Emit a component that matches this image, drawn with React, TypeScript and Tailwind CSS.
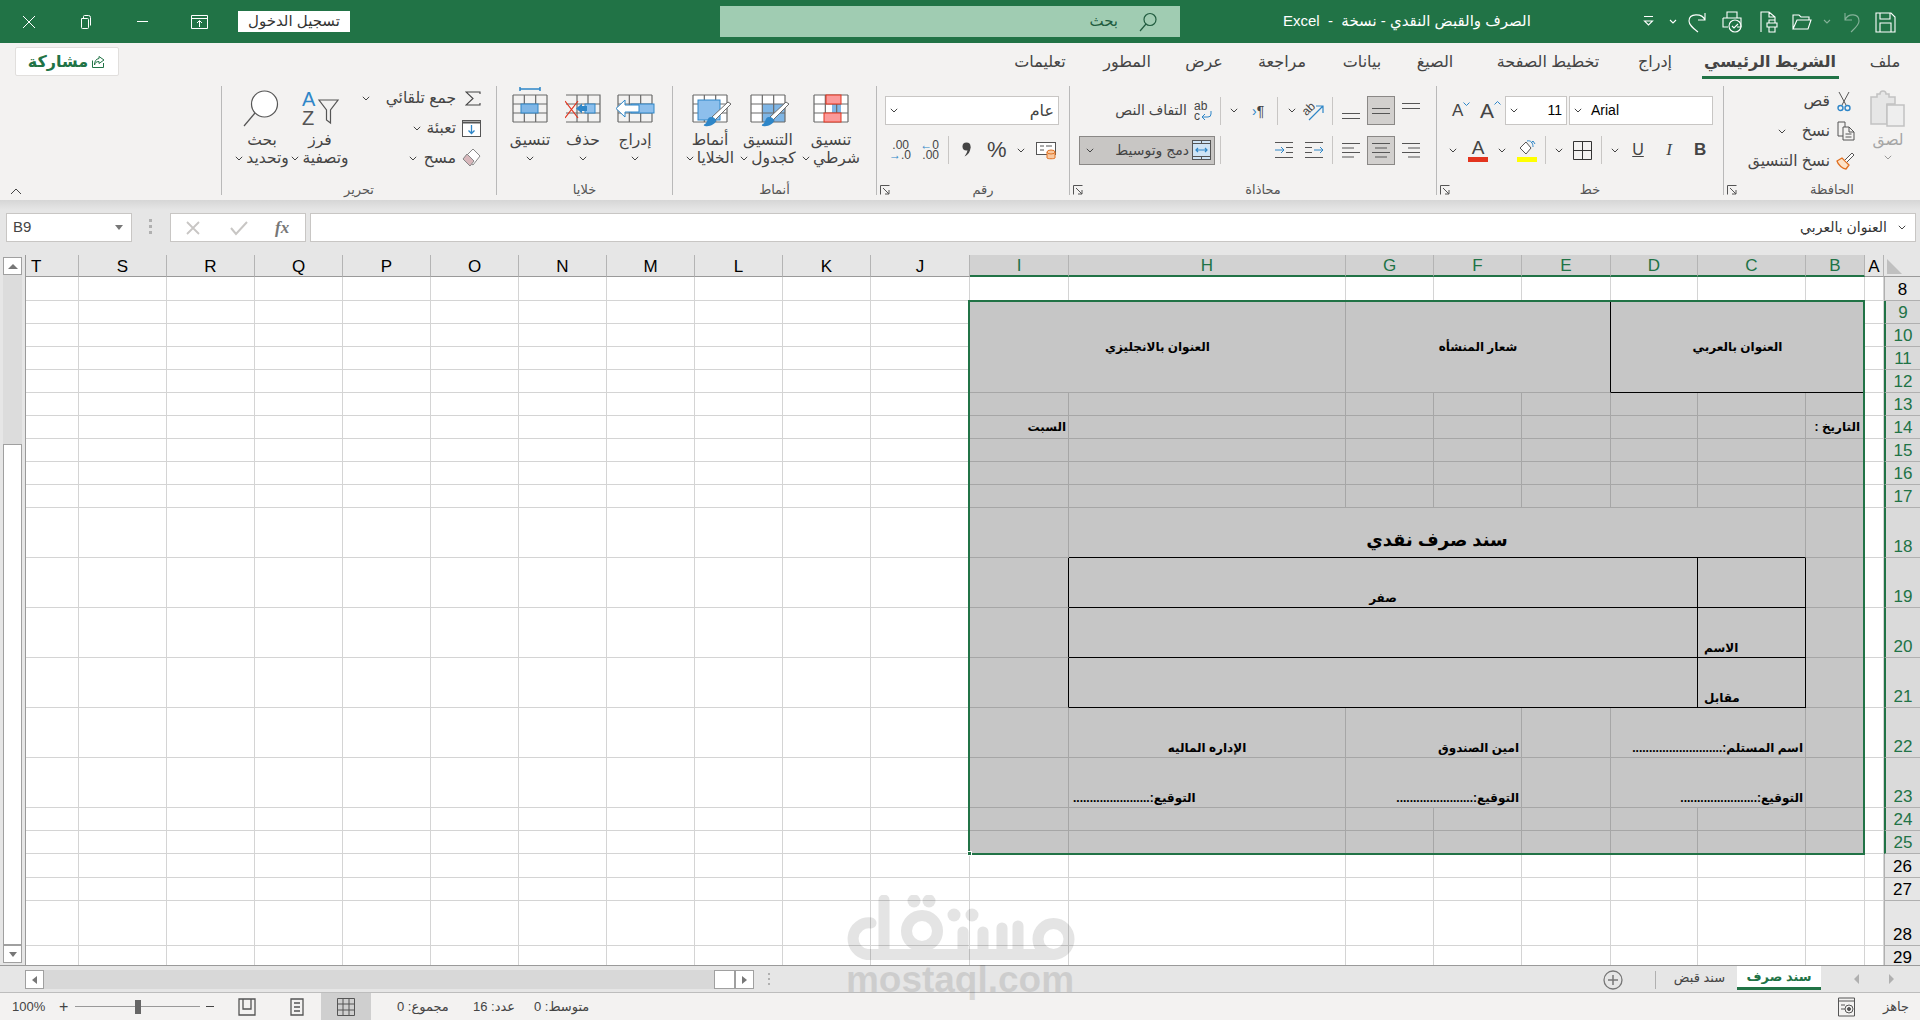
import type { ReactNode } from "react";

function Chev({ className = "" }: { className?: string }) {
  return (
    <svg width="8" height="5" viewBox="0 0 8 5" className={`shrink-0 ${className}`}>
      <path d="M.8.8 4 4l3.2-3.2" fill="none" stroke="#444" strokeWidth="1" />
    </svg>
  );
}

function Launcher() {
  return (
    <svg width="10" height="10" viewBox="0 0 10 10">
      <path d="M.5 9.5V.5h9M3 3l6 6M9 5v4H5" fill="none" stroke="#555" strokeWidth="1" />
    </svg>
  );
}

function Sep({ className = "" }: { className?: string }) {
  return <div className={`w-px h-[28px] shrink-0 bg-[#c8c6c4] ${className}`} />;
}

function Ar({ children, className = "" }: { children: ReactNode; className?: string }) {
  return (
    <span dir="rtl" className={`whitespace-nowrap ${className}`}>
      {children}
    </span>
  );
}

/* ---- quick access / title bar ---- */
function WinIcon({ d, w = 14, h = 14 }: { d: string; w?: number; h?: number }) {
  return (
    <svg width={w} height={h} viewBox={`0 0 ${w} ${h}`}>
      <path d={d} fill="none" stroke="#fff" strokeWidth="1" />
    </svg>
  );
}

function TitleBar() {
  return (
    <div className="h-[43px] bg-[#217346] flex items-center text-white shrink-0">
      <div className="w-[57px] flex justify-center">
        <WinIcon d="M1 1l12 12M13 1 1 13" />
      </div>
      <div className="w-[57px] flex justify-center">
        <WinIcon d="M3.5 3V1.5a1 1 0 0 1 1-1h4a2 2 0 0 1 2 2v8M1.5 3.5h6a1 1 0 0 1 1 1v8a1 1 0 0 1-1 1h-5a1 1 0 0 1-1-1z" w={11} h={14} />
      </div>
      <div className="w-[57px] flex justify-center">
        <div className="w-[11px] h-px bg-white" />
      </div>
      <div className="w-[57px] flex justify-center">
        <WinIcon d="M.5 1.5h16v13H.5zM.5 4.5h16M8.5 13V7M6 9l2.5-2.5L11 9" w={17} h={16} />
      </div>
      <div className="ml-[10px] w-[112px] h-[21px] bg-white text-[#333] text-[15px] flex items-center justify-center">
        <Ar>تسجيل الدخول</Ar>
      </div>
      <div className="ml-[370px] w-[460px] h-[31px] bg-[#a0ccb2] flex items-center justify-end pr-[22px] text-[#215c3f] text-[15px]">
        <Ar>بحث</Ar>
        <svg width="20" height="20" viewBox="0 0 20 20" className="ml-[20px]">
          <circle cx="12" cy="7.5" r="6" fill="none" stroke="#215c3f" strokeWidth="1.2" />
          <path d="M8 12 2 19" stroke="#215c3f" strokeWidth="1.2" />
        </svg>
      </div>
      <div className="ml-[103px] w-[247px] text-[15px] text-right">
        <Ar>الصرف والقبض النقدي - نسخة &nbsp;-&nbsp; Excel</Ar>
      </div>
      <svg width="372" height="24" viewBox="1530 11 372 24" className="shrink-0" fill="none" stroke="#fff" strokeWidth="1.1">
        <path d="M1644 17.5h9M1644.5 22h8l-4 4z" />
        <path d="M1670 21l3 3 3-3" />
        <path d="M1705 14v7h-7M1705 21c-3-7-16-7-16 1 0 4 4 7 9 11" />
        <path d="M1727 19v-6h10v6M1723 19h18v9h-4M1723 19v9h5M1727 13h10" />
        <circle cx="1735" cy="27" r="6" />
        <path d="M1732 27l2 2 4-4" />
        <path d="M1761 33V13h8l6 5v4M1769 13v5h6M1767 24h10v4h-10zM1769 24v-3h6v3M1769 28v5h6v-5" />
        <path d="M1793 30V16h6l2 2h8v3M1793 30l4-9h14l-3 9z" />
        <g opacity=".45">
          <path d="M1824 21l3 3 3-3" />
          <path d="M1845 14v7h7M1845 21c3-7 14-7 14 1 0 4-4 7-8 11" />
        </g>
        <path d="M1876 14h15l4 4v15h-19zM1880 14v6h10v-6M1880 33v-9h11v9" />
      </svg>
    </div>
  );
}

function Tab({ w, children, active }: { w: string; children: ReactNode; active?: boolean }) {
  return (
    <div className={`${w} h-[43px] flex flex-col items-center pt-[9px] text-[16px] leading-[20px] ${active ? "font-bold" : ""}`}>
      <Ar>{children}</Ar>
      {active && <div className="mt-[4px] w-[137px] h-[3px] bg-[#217346]" />}
    </div>
  );
}

function TabRow() {
  return (
    <div className="h-[43px] bg-[#f3f2f1] flex text-[#444] shrink-0">
      <div className="ml-[15px] mt-[4px] w-[104px] h-[29px] bg-white border border-[#e1dfdd] rounded-[2px] flex items-center justify-center text-[#217346] text-[16px] font-bold">
        <Ar>مشاركة</Ar>
        <svg width="15" height="15" viewBox="0 0 15 15" className="ml-[3px]" fill="none" stroke="#217346">
          <path d="M1.5 6.5v7h11V9M8 2.5l5 3.5-5 3.5V7.5C5 7.5 4 9 3.5 11 3.5 7 5 5 8 4.5z" />
        </svg>
      </div>
      <div className="ml-auto flex">
        <Tab w="w-[80px]">تعليمات</Tab>
        <Tab w="w-[94px]">المطور</Tab>
        <Tab w="w-[60px]">عرض</Tab>
        <Tab w="w-[96px]">مراجعة</Tab>
        <Tab w="w-[64px]">بيانات</Tab>
        <Tab w="w-[82px]">الصيغ</Tab>
        <Tab w="w-[144px]">تخطيط الصفحة</Tab>
        <Tab w="w-[70px]">إدراج</Tab>
        <Tab w="w-[160px]" active>الشريط الرئيسي</Tab>
        <Tab w="w-[70px]">ملف</Tab>
      </div>
    </div>
  );
}

/* ---- ribbon icons ---- */
function CellGrid({ x = 1, w = 34 }: { x?: number; w?: number }) {
  const cols = [x, x + w / 3, x + (2 * w) / 3, x + w];
  return (
    <g stroke="#6a6a6a" strokeWidth="1.2" fill="none">
      {cols.map((c) => (
        <path key={c} d={`M${c} 1v27`} />
      ))}
      {[1, 10, 19, 28].map((y) => (
        <path key={y} d={`M${x} ${y}h${w}`} />
      ))}
    </g>
  );
}

function Brush() {
  return (
    <g>
      <path d="M36 8l3 2-16 16-3-3z" fill="#fff" stroke="#6a6a6a" />
      <path d="M19 23c3 0 5 2 5 4-1 3-6 6-11 5-1 0-2-1 0-2 3-2 2-7 6-7z" fill="#2e86c8" />
    </g>
  );
}

function CondIcon() {
  return (
    <svg width="36" height="32" viewBox="0 0 36 32" className="overflow-visible">
      <rect x="1" y="1" width="34" height="27" fill="#fff" />
      <rect x="19" y="10" width="9" height="9" fill="#7fb6e6" />
      <CellGrid />
      <rect x="13" y="1" width="15" height="9" fill="#fb9a9a" stroke="#e3341e" />
      <rect x="11" y="19" width="17" height="9" fill="#fb9a9a" stroke="#e3341e" />
    </svg>
  );
}

function TableIcon() {
  return (
    <svg width="36" height="32" viewBox="0 0 36 32" className="overflow-visible">
      <rect x="1" y="1" width="34" height="27" fill="#fff" />
      <rect x="12" y="10" width="23" height="18" fill="#7fb6e6" />
      <CellGrid />
      <Brush />
    </svg>
  );
}

function CellStyleIcon() {
  return (
    <svg width="36" height="32" viewBox="0 0 36 32" className="overflow-visible">
      <rect x="1" y="1" width="34" height="27" fill="#fff" />
      <CellGrid />
      <rect x="6" y="6" width="22" height="20" fill="#8dbfec" stroke="#2e86c8" />
      <Brush />
    </svg>
  );
}

function InsertIcon() {
  return (
    <svg width="40" height="29" viewBox="0 0 40 29">
      <CellGrid x={3} w={34} />
      <rect x="16" y="10" width="23" height="9" fill="#8dbfec" stroke="#2e86c8" />
      <path d="M1 14.500 10 6v5h14v7H10v5z" fill="#fff" stroke="#2e86c8" />
    </svg>
  );
}

function DeleteIcon() {
  return (
    <svg width="36" height="29" viewBox="0 0 36 29">
      <g stroke="#6a6a6a" strokeWidth="1.200" fill="none">
        <path d="M1 1h34v27H1M12 1v27M23 1v27M1 10h34M1 19h34" />
      </g>
      <rect x="20" y="10" width="10" height="9" fill="#8dbfec" stroke="#2e86c8" />
      <path d="M11 14.500l6-5v2.500h5v5h-5v2.500z" fill="#2e86c8" />
      <path d="M0 7l13 17M13 7 0 24" stroke="#e3341e" strokeWidth="1.200" fill="none" />
    </svg>
  );
}

function FormatIcon() {
  return (
    <svg width="36" height="29" viewBox="0 0 36 29" className="overflow-visible">
      <path d="M8-5h20M8-7v4M28-7v4" stroke="#2e86c8" strokeWidth="1.500" fill="none" />
      <CellGrid />
      <rect x="9" y="10" width="17" height="9" fill="#7fb6e6" stroke="#2e86c8" />
    </svg>
  );
}

function SumIcon() {
  return (
    <svg width="16" height="15" viewBox="0 0 16 15">
      <path d="M15 3V1H1l7 6.500L1 14h14v-2" fill="none" stroke="#444" strokeWidth="1.100" />
    </svg>
  );
}

function FillIcon() {
  return (
    <svg width="19" height="17" viewBox="0 0 19 17">
      <rect x=".5" y=".5" width="18" height="16" fill="#fff" stroke="#555" />
      <path d="M.5 2.500h18" stroke="#555" strokeWidth="2" />
      <path d="M9.500 5v8M6.500 10.500l3 3 3-3" fill="none" stroke="#2e86c8" strokeWidth="1.300" />
    </svg>
  );
}

function ClearIcon() {
  return (
    <svg width="20" height="20" viewBox="0 0 20 20">
      <path d="M12 1l7 7-7 9-9-7z" fill="#fff" stroke="#888" />
      <path d="M2 11l4-5 7 7-4 5z" fill="#d8b8bc" stroke="#888" />
    </svg>
  );
}

function SortIcon() {
  return (
    <svg width="37" height="36" viewBox="0 0 37 36" fill="none" className="overflow-visible -mt-[4px]">
      <text x="0" y="16" fontSize="20" fill="#2e86c8" fontFamily="Liberation Sans">A</text>
      <text x="0" y="35" fontSize="20" fill="#555" fontFamily="Liberation Sans">Z</text>
      <path d="M17 10h19l-7.500 10v13l-4-3V20z" stroke="#555" strokeWidth="1.200" />
    </svg>
  );
}

function SearchIcon() {
  return (
    <svg width="36" height="37" viewBox="0 0 36 37" fill="none" stroke="#555" strokeWidth="1.200" className="-mt-[4px] -ml-[2px]">
      <circle cx="21.500" cy="14" r="13" fill="#fff" />
      <path d="M12 23 1 36" />
    </svg>
  );
}

function PasteIcon() {
  return (
    <svg width="36" height="38" viewBox="0 0 36 38" fill="none" stroke="#c2c2c2" strokeWidth="1.500">
      <path d="M1 7h6V4h3a3 3 0 0 1 6 0h3v3h6v7H17v20H1z" fill="#e6e6e6" />
      <rect x="17" y="15" width="17" height="21" fill="#eee" />
    </svg>
  );
}

function ScissorsIcon() {
  return (
    <svg width="14" height="21" viewBox="0 0 14 21" fill="none" className="mr-[4px]">
      <path d="M2 1l7 13M12 1 5 14" stroke="#555" />
      <circle cx="3.500" cy="17" r="2.500" stroke="#2e86c8" strokeWidth="1.400" />
      <circle cx="10.500" cy="17" r="2.500" stroke="#2e86c8" strokeWidth="1.400" />
    </svg>
  );
}

function CopyIcon() {
  return (
    <svg width="18" height="20" viewBox="0 0 18 20" fill="none" stroke="#555">
      <path d="M6 15H1V1h7v5" />
      <path d="M6 6h6l5 5v8H6zM12 6v5h5M8.500 13h6M8.500 16h6" />
    </svg>
  );
}

function PainterIcon() {
  return (
    <svg width="19" height="18" viewBox="0 0 19 18" fill="none">
      <path d="M1 9l5-3 7 7-3 4c-3 0-8-4-9-8z" fill="#fde3c8" stroke="#e07020" strokeWidth="1.300" />
      <path d="M9 8l7-7 2 2-7 7" fill="#fff" stroke="#555" />
    </svg>
  );
}

function Lines({ widths, y0, step, align }: { widths: number[]; y0: number; step: number; align: "l" | "c" | "r" }) {
  return (
    <svg width="18" height="18" viewBox="0 0 18 18" className="shrink-0">
      {widths.map((w, i) => {
        const x = align === "l" ? 0 : align === "r" ? 18 - w : (18 - w) / 2;
        return <path key={i} d={`M${x} ${y0 + i * step + 0.5}h${w}`} stroke="#555" />;
      })}
    </svg>
  );
}

function IndentIcon({ flip }: { flip?: boolean }) {
  return (
    <svg width="18" height="18" viewBox="0 0 18 18" className="shrink-0" fill="none">
      <path d="M0 1.500h18M0 16.500h18" stroke="#555" />
      {flip ? (
        <>
          <path d="M0 6.500h7M0 11.500h7" stroke="#555" />
          <path d="M9 9h9M15 6l3 3-3 3" stroke="#2e86c8" />
        </>
      ) : (
        <>
          <path d="M11 6.500h7M11 11.500h7" stroke="#555" />
          <path d="M0 9h9M6 6l3 3-3 3" stroke="#2e86c8" />
        </>
      )}
    </svg>
  );
}

function Selected({ children }: { children: ReactNode }) {
  return (
    <div className="w-[28px] h-[29px] ml-[7px] mr-[7px] bg-[#d2d0ce] border border-[#8a8886] flex items-center justify-center">{children}</div>
  );
}

function MergeIcon() {
  return (
    <svg width="19" height="20" viewBox="0 0 19 20" fill="none">
      <rect x=".5" y=".5" width="18" height="19" fill="#cfe4f5" stroke="#555" />
      <path d="M.5 3.500h18M.5 16.500h18" stroke="#555" />
      <path d="M9.500 .5v3M9.500 16.500v3" stroke="#555" />
      <path d="M4 10h11M6 8l-2 2 2 2M13 8l2 2-2 2" stroke="#2e86c8" strokeWidth="1.200" />
    </svg>
  );
}

/* ---- ribbon ---- */
function Group({ w, label, launcher, children }: { w: string; label: string; launcher?: boolean; children: ReactNode }) {
  return (
    <div className={`${w} flex shrink-0`}>
      <div className="w-px h-[109px] bg-[#b9b9b9] shrink-0" />
      <div className="flex-1 min-w-0 flex flex-col">
        <div className="h-[94px]">{children}</div>
        <div className="h-[20px] flex items-center text-[13px] text-[#555]">
          {launcher && (
            <div className="w-[20px] pl-[3px] flex items-center">
              <Launcher />
            </div>
          )}
          <div className="flex-1 text-center">
            <Ar>{label}</Ar>
          </div>
        </div>
      </div>
    </div>
  );
}

function BigItem({ icon, l1, l2, w, className = "" }: { icon: ReactNode; l1: string; l2?: string; w: string; className?: string }) {
  return (
    <div className={`${w} ${className} flex flex-col items-center pt-[8px] shrink-0`}>
      <div className="h-[36px] flex justify-center">{icon}</div>
      <div className="h-[19px] leading-[19px] text-center">
        <Ar>{l1}</Ar>
      </div>
      <div className="h-[18px] flex items-center justify-center">
        <Chev className={l2 ? "mr-[3px]" : ""} />
        {l2 && <Ar>{l2}</Ar>}
      </div>
    </div>
  );
}

function SmallRow({ icon, label, chev, gap = "" }: { icon: ReactNode; label: string; chev?: boolean; gap?: string }) {
  return (
    <div className="h-[30px] flex items-center justify-end">
      {chev && <Chev className={gap} />}
      <Ar>{label}</Ar>
      <div className="w-[26px] flex justify-end pr-[1px]">{icon}</div>
    </div>
  );
}

function DecimalIcon({ more }: { more?: boolean }) {
  return (
    <div className="w-[20px] text-[12px] leading-[10px] text-right">
      {more ? (
        <>
          <span className="text-[#2e86c8]">←</span>0
          <br />
          .00
        </>
      ) : (
        <>
          .00
          <br />
          <span className="text-[#2e86c8]">→</span>.0
        </>
      )}
    </div>
  );
}

function Ribbon() {
  return (
    <div className="h-[114px] bg-[#f3f2f1] flex text-[#444] text-[15.5px] shrink-0">
      <div className="w-[221px] shrink-0 flex items-end pb-[5px] pl-[10px]">
        <svg width="12" height="7" viewBox="0 0 12 7">
          <path d="M1 6l5-5 5 5" fill="none" stroke="#444" />
        </svg>
      </div>

      <Group w="w-[275px]" label="تحرير">
        <div className="flex">
          <BigItem w="w-[50px]" className="ml-[15px]" icon={<SearchIcon />} l1="بحث" l2="وتحديد" />
          <BigItem w="w-[50px]" className="ml-[8px]" icon={<SortIcon />} l1="فرز" l2="وتصفية" />
          <div className="ml-[15px] w-[122px] -mt-[3px]">
            <SmallRow icon={<SumIcon />} label="جمع تلقائي" chev gap="mr-[16px]" />
            <SmallRow icon={<FillIcon />} label="تعبئة" chev gap="mr-[6px]" />
            <SmallRow icon={<ClearIcon />} label="مسح" chev gap="mr-[7px]" />
          </div>
        </div>
      </Group>

      <Group w="w-[176px]" label="خلايا">
        <div className="flex">
          <BigItem w="w-[52px]" className="ml-[7px]" icon={<FormatIcon />} l1="تنسيق" />
          <BigItem w="w-[52px]" className="ml-[1px]" icon={<DeleteIcon />} l1="حذف" />
          <BigItem w="w-[52px]" icon={<InsertIcon />} l1="إدراج" />
        </div>
      </Group>

      <Group w="w-[204px]" label="أنماط">
        <div className="flex">
          <BigItem w="w-[58px]" className="ml-[8px]" icon={<CellStyleIcon />} l1="أنماط" l2="الخلايا" />
          <BigItem w="w-[58px]" icon={<TableIcon />} l1="التنسيق" l2="كجدول" />
          <BigItem w="w-[58px]" className="ml-[5px]" icon={<CondIcon />} l1="تنسيق" l2="شرطي" />
        </div>
      </Group>

      <Group w="w-[193px]" label="رقم" launcher>
        <div className="mt-[10px] ml-[8px] w-[174px] h-[29px] bg-white border border-[#c8c6c4] flex items-center justify-between px-[4px] text-[16px]">
          <Chev />
          <Ar>عام</Ar>
        </div>
        <div className="mt-[10px] h-[30px] flex items-center">
          <div className="ml-[12px]">
            <DecimalIcon />
          </div>
          <div className="ml-[10px]">
            <DecimalIcon more />
          </div>
          <Sep className="ml-[9px]" />
          <svg width="9" height="16" viewBox="0 0 9 16" className="ml-[13px]">
            <circle cx="4.500" cy="4.500" r="4" fill="#444" />
            <path d="M8.500 4.500c0 5-2 8-6 10 2-3 3-5 3-7z" fill="#444" />
          </svg>
          <div className="ml-[16px] w-[19px] text-[22px] leading-[22px]">%</div>
          <Chev className="ml-[11px]" />
          <svg width="20" height="20" viewBox="0 0 20 20" className="ml-[11px]" fill="none">
            <rect x=".5" y="2.500" width="19" height="12" fill="#fff" stroke="#555" />
            <path d="M4 6h4M4 10h4M10 6h6" stroke="#555" />
            <path d="M11 12v6c0 1 8 1 8 0v-6" fill="#f9c9a0" stroke="#e07020" />
            <ellipse cx="15" cy="12" rx="4" ry="2" fill="#f9c9a0" stroke="#e07020" />
          </svg>
        </div>
      </Group>

      <Group w="w-[367px]" label="محاذاة" launcher>
        <div className="mt-[10px] h-[29px] flex items-center">
          <div className="ml-[44px] w-[73px] text-right text-[14px]">
            <Ar>التفاف النص</Ar>
          </div>
          <svg width="18" height="20" viewBox="0 0 18 20" className="ml-[7px]" fill="none">
            <text x="0" y="9" fontSize="12" fill="#444" fontFamily="Liberation Sans">ab</text>
            <text x="0" y="19" fontSize="12" fill="#444" fontFamily="Liberation Sans">c</text>
            <path d="M17 10v3a3 3 0 0 1-3 3H8M11 13l-3 3 3 3" stroke="#2e86c8" />
          </svg>
          <Sep className="ml-[8px]" />
          <Chev className="ml-[9px]" />
          <div className="ml-[14px] w-[15px] text-[14px] leading-none">
            <span className="text-[#2e86c8]">›</span>¶
          </div>
          <Sep className="ml-[10px]" />
          <Chev className="ml-[10px]" />
          <svg width="20" height="20" viewBox="0 0 20 20" className="ml-[8px] overflow-visible">
            <text x="-1" y="11" fontSize="12" fill="#444" transform="rotate(-45 6 9)" fontFamily="Liberation Sans">ab</text>
            <path d="M5 19 19 5M12 5h7v7" fill="none" stroke="#2e86c8" strokeWidth="1.200" />
          </svg>
          <Sep className="ml-[8px]" />
          <div className="ml-[9px]">
            <Lines widths={[18, 18]} y0={11} step={5} align="c" />
          </div>
          <Selected>
            <Lines widths={[18, 18]} y0={6} step={5} align="c" />
          </Selected>
          <Lines widths={[18, 18]} y0={1} step={5} align="c" />
        </div>
        <div className="mt-[10px] h-[30px] flex items-center">
          <div className="ml-[9px] w-[136px] h-[29px] bg-[#c8c6c4] border border-[#8a8886] flex items-center pl-[6px] pr-[3px]">
            <Chev />
            <div className="flex-1 text-right pr-[3px] text-[14px]">
              <Ar>دمج وتوسيط</Ar>
            </div>
            <MergeIcon />
          </div>
          <Sep className="ml-[5px]" />
          <div className="ml-[54px]">
            <IndentIcon />
          </div>
          <div className="ml-[12px]">
            <IndentIcon flip />
          </div>
          <Sep className="ml-[9px]" />
          <div className="ml-[9px]">
            <Lines widths={[18, 12, 18, 12]} y0={2} step={4.500} align="l" />
          </div>
          <Selected>
            <Lines widths={[18, 12, 18, 12]} y0={2} step={4.500} align="c" />
          </Selected>
          <Lines widths={[18, 12, 18, 12]} y0={2} step={4.500} align="r" />
        </div>
      </Group>

      <Group w="w-[287px]" label="خط" launcher>
        <div className="mt-[10px] h-[29px] flex items-center">
          <div className="ml-[15px] w-[16px] text-[17px] leading-none relative">
            A
            <svg width="7" height="4" viewBox="0 0 7 4" className="absolute left-[11px] top-[0px]">
              <path d="M.5.5l3 3 3-3" fill="none" stroke="#2e86c8" />
            </svg>
          </div>
          <div className="ml-[12px] w-[19px] text-[21px] leading-none relative">
            A
            <svg width="7" height="4" viewBox="0 0 7 4" className="absolute left-[14px] top-[1px]">
              <path d="M.5 3.500l3-3 3 3" fill="none" stroke="#2e86c8" />
            </svg>
          </div>
          <div className="ml-[6px] w-[62px] h-[29px] bg-white border border-[#c8c6c4] flex items-center justify-between px-[4px] text-[14px] text-black">
            <Chev />
            <span>11</span>
          </div>
          <div className="ml-[2px] w-[144px] h-[29px] bg-white border border-[#c8c6c4] flex items-center px-[4px] text-[14px] text-black">
            <Chev />
            <span className="ml-[9px]">Arial</span>
          </div>
        </div>
        <div className="mt-[10px] h-[30px] flex items-center">
          <Chev className="ml-[12px]" />
          <div className="ml-[11px] w-[20px] flex flex-col items-center">
            <span className="text-[19px] leading-[19px]">A</span>
            <div className="w-[20px] h-[5px] bg-[#e3341e]" />
          </div>
          <Chev className="ml-[10px]" />
          <div className="ml-[11px] w-[20px] flex flex-col items-center">
            <svg width="18" height="18" viewBox="0 0 18 18" fill="none">
              <path d="M2 9l6-6 5 6-5 6z" fill="#fff" stroke="#555" />
              <path d="M9 2c4-1 6 2 6 6M13 4l2-2 2 3" stroke="#2e86c8" />
            </svg>
            <div className="w-[20px] h-[5px] bg-[#ffff00]" />
          </div>
          <Sep className="ml-[8px]" />
          <Chev className="ml-[9px]" />
          <svg width="19" height="19" viewBox="0 0 19 19" className="ml-[10px]" fill="none">
            <path d="M.5.5h18v18H.5zM9.500.5v18M.5 9.500h18" stroke="#333" />
          </svg>
          <Sep className="ml-[9px]" />
          <Chev className="ml-[9px]" />
          <div className="ml-[13px] w-[12px] text-[16px] underline text-center">U</div>
          <div className="ml-[19px] w-[12px] text-[17px] italic text-center font-['Liberation_Serif',serif]">I</div>
          <div className="ml-[19px] w-[12px] text-[17px] font-bold text-center">B</div>
        </div>
      </Group>

      <Group w="w-[197px]" label="الحافظة" launcher>
        <div className="flex">
          <div className="ml-[16px] w-[116px]">
            <SmallRow icon={<ScissorsIcon />} label="قص" />
            <SmallRow icon={<CopyIcon />} label="نسخ" chev gap="mr-[16px]" />
            <SmallRow icon={<PainterIcon />} label="نسخ التنسيق" />
          </div>
          <div className="ml-[14px] w-[36px] pt-[4px] flex flex-col items-center text-[#a5a5a5]">
            <PasteIcon />
            <div className="h-[19px] leading-[19px] mt-[2px]">
              <Ar>لصق</Ar>
            </div>
            <Chev className="mt-[6px] opacity-50" />
          </div>
        </div>
      </Group>
    </div>
  );
}

function FormulaBar() {
  return (
    <div className="h-[55px] bg-[#e6e6e6] shrink-0 flex flex-col">
      <div className="h-[10px] bg-gradient-to-b from-[#d6d6d6] to-[#e6e6e6]" />
      <div className="mt-[3px] flex items-start h-[29px]">
        <div className="ml-[6px] w-[126px] h-[29px] bg-white border border-[#c8c6c4] flex items-center justify-between pl-[6px] pr-[8px] text-[15px] text-[#444]">
          <span>B9</span>
          <div className="w-0 h-0 border-x-[4px] border-x-transparent border-t-[5px] border-t-[#777]" />
        </div>
        <div className="ml-[17px] mt-[6px] w-[3px] flex flex-col gap-[3px]">
          <div className="h-[3px] bg-[#b0b0b0]" />
          <div className="h-[3px] bg-[#b0b0b0]" />
          <div className="h-[3px] bg-[#b0b0b0]" />
        </div>
        <div className="ml-[18px] w-[136px] h-[29px] bg-white border border-[#c8c6c4] flex items-center text-[#bbb]">
          <svg width="16" height="16" viewBox="0 0 16 16" className="ml-[14px]">
            <path d="M2 2l12 12M14 2 2 14" stroke="#c8c6c4" strokeWidth="1.800" />
          </svg>
          <svg width="18" height="16" viewBox="0 0 18 16" className="ml-[29px]">
            <path d="M1 8l5 6L17 2" fill="none" stroke="#c8c6c4" strokeWidth="2" />
          </svg>
          <span className="ml-[27px] text-[17px] italic font-bold text-[#777] font-['Liberation_Serif',serif]">fx</span>
        </div>
        <div className="ml-[4px] w-[1606px] h-[29px] bg-white border border-[#c8c6c4] flex items-center justify-end pr-[9px] text-[14px] text-[#333]">
          <Ar>العنوان بالعربي</Ar>
          <Chev className="ml-[11px]" />
        </div>
      </div>
    </div>
  );
}

/* ---- sheet ---- */
const COLS = ["T", "S", "R", "Q", "P", "O", "N", "M", "L", "K", "J", "I", "H", "G", "F", "E", "D", "C", "B", "A"];
const BLACK_R = "border-r-black";
const BLACK_B = "border-b-black";

function Blank({ sel, cls = "", children }: { sel?: boolean; cls?: string; children?: ReactNode }) {
  return (
    <div
      className={`flex min-w-0 border-r border-b ${
        sel ? "bg-[#c6c6c6] border-r-[#a6a6a6] border-b-[#a6a6a6]" : "bg-white border-r-[#d4d4d4] border-b-[#d4d4d4]"
      } ${cls}`}
    >
      {children}
    </div>
  );
}

function RowHeader({ n, sel }: { n: number; sel?: boolean }) {
  return (
    <div
      className={`flex items-end justify-center text-[17px] leading-[20px] border-b border-b-[#b0b0b0] ${
        sel ? "bg-[#dadada] text-[#217346] border-l-2 border-l-[#217346]" : "bg-[#e6e6e6] text-black border-l border-l-[#b0b0b0]"
      }`}
    >
      {n}
    </div>
  );
}

function CT({ children, cls = "" }: { children: ReactNode; cls?: string }) {
  return (
    <span dir="rtl" className={`whitespace-nowrap text-[12px] font-bold leading-[18px] text-black ${cls}`}>
      {children}
    </span>
  );
}

function middle(n: number) {
  const plain = (sel: boolean, count = 8) =>
    Array.from({ length: count }, (_, i) => <Blank key={`p${i}`} sel={sel} />);
  if (n === 9)
    return [
      <Blank key="a" sel cls="col-span-2 row-span-4 items-center justify-center">
        <CT>العنوان بالانجليزي</CT>
      </Blank>,
      <Blank key="b" sel cls={`col-span-3 row-span-4 items-center justify-center ${BLACK_R}`}>
        <CT>شعار المنشأه</CT>
      </Blank>,
      <Blank key="c" sel cls={`col-span-3 row-span-4 items-center justify-center ${BLACK_B}`}>
        <CT>العنوان بالعربي</CT>
      </Blank>,
    ];
  if (n >= 10 && n <= 12) return [];
  if (n === 14)
    return [
      <Blank key="i" sel cls="items-center justify-end pr-[2px]">
        <CT>السبت</CT>
      </Blank>,
      ...plain(true, 6),
      <Blank key="bb" sel cls="items-center justify-end pr-[4px]">
        <CT>التاريخ :</CT>
      </Blank>,
    ];
  if (n === 18)
    return [
      <Blank key="i" sel />,
      <Blank key="t" sel cls={`col-span-6 items-end justify-center ${BLACK_B}`}>
        <CT cls="text-[18px] leading-[34px]">سند صرف نقدي</CT>
      </Blank>,
      <Blank key="bb" sel />,
    ];
  if (n === 19 || n === 20 || n === 21) {
    const label = n === 20 ? "الاسم" : n === 21 ? "مقابل" : "";
    return [
      <Blank key="i" sel cls={BLACK_R} />,
      <Blank key="t" sel cls={`col-span-5 items-end justify-center ${BLACK_R} ${BLACK_B}`}>
        {n === 19 && <CT>صفر</CT>}
      </Blank>,
      <Blank key="c" sel cls={`items-end justify-start pl-[6px] ${BLACK_R} ${BLACK_B}`}>
        {label && <CT>{label}</CT>}
      </Blank>,
      <Blank key="bb" sel />,
    ];
  }
  if (n === 22 || n === 23) {
    const sig = "التوقيع:.......................";
    return [
      <Blank key="i" sel />,
      <Blank key="h" sel cls={`items-end ${n === 22 ? "justify-center" : "justify-start pl-[4px]"}`}>
        <CT>{n === 22 ? "الإداره الماليه" : sig}</CT>
      </Blank>,
      <Blank key="g" sel cls="col-span-2 items-end justify-end pr-[2px]">
        <CT>{n === 22 ? "امين الصندوق" : sig}</CT>
      </Blank>,
      <Blank key="e" sel />,
      <Blank key="d" sel cls="col-span-2 items-end justify-end pr-[2px]">
        <CT>{n === 22 ? "اسم المستلم:..........................." : sig}</CT>
      </Blank>,
      <Blank key="bb" sel />,
    ];
  }
  return plain(n >= 9 && n <= 25);
}

const ROWS = Array.from({ length: 22 }, (_, i) => i + 8);

function Sheet() {
  return (
    <div className="h-[710px] flex bg-[#e6e6e6] shrink-0">
      <div className="w-[25px] shrink-0 pl-[3px] flex flex-col">
        <div className="mt-[2px] w-[19px] h-[18px] bg-white border border-[#a0a0a0] flex items-center justify-center">
          <div className="w-0 h-0 border-x-[5px] border-x-transparent border-b-[5px] border-b-[#777]" />
        </div>
        <div className="w-[19px] h-[169px] bg-[#dcdcdc]" />
        <div className="w-[19px] h-[501px] bg-white border border-[#a0a0a0]" />
        <div className="w-[19px] h-[18px] bg-white border border-[#a0a0a0] flex items-center justify-center">
          <div className="w-0 h-0 border-x-[4px] border-x-transparent border-t-[5px] border-t-[#777]" />
        </div>
      </div>
      <div className="flex-1 min-w-0 overflow-hidden">
        <div className="relative grid grid-cols-[53px_repeat(9,88px)_99px_99px_277px_88px_88px_89px_87px_108px_59px_19px_36px] grid-rows-[22px_24px_repeat(9,23px)_repeat(6,50px)_23px_23px_24px_23px_45px_23px] border-l border-l-[#9a9a9a] w-[1895px]">
          {COLS.map((c, i) => {
            const sel = i >= 11 && i <= 18;
            return (
              <div
                key={c}
                className={`flex items-center text-[17px] leading-none pt-[1px] border-r border-r-[#b4b4b4] ${
                  i === 0 ? "justify-start pl-[5px]" : "justify-center"
                } ${
                  sel
                    ? "bg-[#d2d2d2] text-[#217346] border-b-2 border-b-[#217346]"
                    : "bg-[#e6e6e6] text-black border-b border-b-[#9a9a9a]"
                }`}
              >
                {c}
              </div>
            );
          })}
          <div className="bg-[#e6e6e6] border-b border-b-[#9a9a9a] flex items-end pl-[3px] pb-[2px]">
            <svg width="15" height="15" viewBox="0 0 15 15">
              <path d="M0 0v15h15z" fill="#c0c0c0" />
            </svg>
          </div>
          {ROWS.flatMap((n) => [
            ...Array.from({ length: 11 }, (_, i) => <Blank key={`l${n}-${i}`} />),
            ...middle(n).map((el, i) => (
              <div key={`m${n}-${i}`} className="contents">
                {el}
              </div>
            )),
            <Blank key={`a${n}`} />,
            <RowHeader key={`h${n}`} n={n} sel={n >= 9 && n <= 25} />,
          ])}
          {/* selection outline spans I9:B25, absolute so it stays out of auto placement */}
          <div className="absolute inset-0 col-start-12 col-end-20 row-start-3 row-end-20 border-2 border-[#217346] -mt-px -mb-px -ml-[2px] pointer-events-none">
            <div className="absolute -left-[3px] -bottom-[3px] w-[5px] h-[5px] bg-[#217346] border border-white" />
          </div>
        </div>
      </div>
    </div>
  );
}

function SheetTabs() {
  return (
    <div className="h-[28px] bg-[#e6e6e6] border-t border-t-[#9a9a9a] border-b border-b-[#bdbdbd] flex items-start shrink-0 text-[13px] text-[#444]">
      <div className="ml-[25px] mt-[4px] w-[19px] h-[19px] bg-white border border-[#a0a0a0] flex items-center justify-center">
        <div className="w-0 h-0 border-y-[4px] border-y-transparent border-r-[5px] border-r-[#777]" />
      </div>
      <div className="w-[670px] h-[19px] mt-[4px] bg-[#d8d8d8]" />
      <div className="w-[21px] h-[19px] mt-[4px] bg-white border border-[#a0a0a0]" />
      <div className="w-[19px] h-[19px] mt-[4px] bg-white border border-[#a0a0a0] flex items-center justify-center">
        <div className="w-0 h-0 border-y-[4px] border-y-transparent border-l-[5px] border-l-[#777]" />
      </div>
      <div className="ml-[14px] mt-[7px] w-[2px] flex flex-col gap-[3px]">
        <div className="h-[2px] bg-[#b0b0b0]" />
        <div className="h-[2px] bg-[#b0b0b0]" />
        <div className="h-[2px] bg-[#b0b0b0]" />
      </div>
      <svg width="20" height="20" viewBox="0 0 20 20" className="ml-[833px] mt-[4px]" fill="none" stroke="#777">
        <circle cx="10" cy="10" r="9" strokeWidth="1.300" />
        <path d="M10 5v10M5 10h10" strokeWidth="1.500" />
      </svg>
      <div className="ml-[32px] mt-[5px] w-px h-[18px] bg-[#b0b0b0]" />
      <div className="w-[81px] h-[24px] flex items-center justify-center pl-[6px]">
        <Ar>سند قبض</Ar>
      </div>
      <div className="w-[84px] h-[24px] bg-white border-b-[3px] border-b-[#217346] flex items-center justify-center font-bold text-[#217346]">
        <Ar>سند صرف</Ar>
      </div>
      <svg width="40" height="12" viewBox="0 0 40 12" className="ml-[33px] mt-[7px]" fill="#b0b0b0">
        <path d="M5 1v10L0 6zM35 1v10l5-5z" />
      </svg>
    </div>
  );
}

function StatusBar() {
  return (
    <div className="h-[27px] bg-[#f3f2f1] flex items-center shrink-0 text-[13px] text-[#444]">
      <span className="ml-[12px] w-[34px]">100%</span>
      <span className="ml-[13px] text-[16px] w-[12px]">+</span>
      <div className="ml-[4px] w-[125px] h-px bg-[#999] flex items-center justify-center">
        <div className="w-[6px] h-[14px] bg-[#666]" />
      </div>
      <span className="ml-[6px] w-[8px] h-px bg-[#444]" />
      <svg width="18" height="18" viewBox="0 0 18 18" className="ml-[24px]" fill="none" stroke="#555" strokeWidth="1.300">
        <path d="M1 1h16v16H1zM5 1v10h8V1" />
      </svg>
      <svg width="18" height="18" viewBox="0 0 18 18" className="ml-[32px]" fill="none" stroke="#555" strokeWidth="1.300">
        <path d="M3 1h12v16H3zM6 5h6M6 9h6M6 13h6" />
      </svg>
      <div className="ml-[15px] w-[50px] h-[27px] bg-[#cfcfcf] flex items-center justify-center">
        <svg width="18" height="18" viewBox="0 0 18 18" fill="none" stroke="#555">
          <path d="M.5.5h17v17H.5zM.5 6h17M.5 12h17M6 .5v17M12 .5v17" />
        </svg>
      </div>
      <div className="ml-[26px] w-[56px] text-left">
        <Ar>مجموع: 0</Ar>
      </div>
      <div className="ml-[20px] w-[45px] text-left">
        <Ar>عدد: 16</Ar>
      </div>
      <div className="ml-[16px] w-[60px]">
        <Ar>متوسط: 0</Ar>
      </div>
      <svg width="17" height="20" viewBox="0 0 17 20" className="ml-auto mr-[4px]" fill="none" stroke="#555">
        <path d="M.5 1h16v18H.5zM.5 4h16M3 8h4M3 12h4" />
        <circle cx="11" cy="12" r="4" />
        <circle cx="11" cy="12" r="1.500" fill="#555" />
      </svg>
      <div className="ml-[24px] mr-[11px]">
        <Ar>جاهز</Ar>
      </div>
    </div>
  );
}

function Watermark() {
  return (
    <div className="absolute left-[845px] top-[895px] w-[230px] h-[106px] opacity-10 pointer-events-none">
      <svg width="230" height="66" viewBox="845 895 230 66" fill="none" stroke="#000" strokeWidth="11" strokeLinecap="round">
        <path d="M871 923a15.500 15.500 0 0 0-4 31.500H1053" />
        <path d="M884 900v54" />
        <circle cx="922" cy="931" r="15.500" />
        <path d="M963 932v22M983 932v22M1002 928v26M1018 926v28" />
        <circle cx="1053.500" cy="939" r="15.500" />
        <g fill="#000" stroke="none">
          <circle cx="914" cy="901" r="6.500" />
          <circle cx="929" cy="901" r="6.500" />
          <circle cx="954" cy="915" r="6.500" />
          <circle cx="972" cy="915" r="6.500" />
        </g>
      </svg>
      <div className="mt-[4px] text-[37px] leading-[30px] font-bold text-black text-center">mostaql.com</div>
    </div>
  );
}

export default function App() {
  return (
    <div className="relative w-[1920px] h-[1020px] overflow-hidden flex flex-col font-['Liberation_Sans','DejaVu_Sans',sans-serif] bg-white">
      <TitleBar />
      <TabRow />
      <Ribbon />
      <FormulaBar />
      <Sheet />
      <SheetTabs />
      <StatusBar />
      <Watermark />
    </div>
  );
}
